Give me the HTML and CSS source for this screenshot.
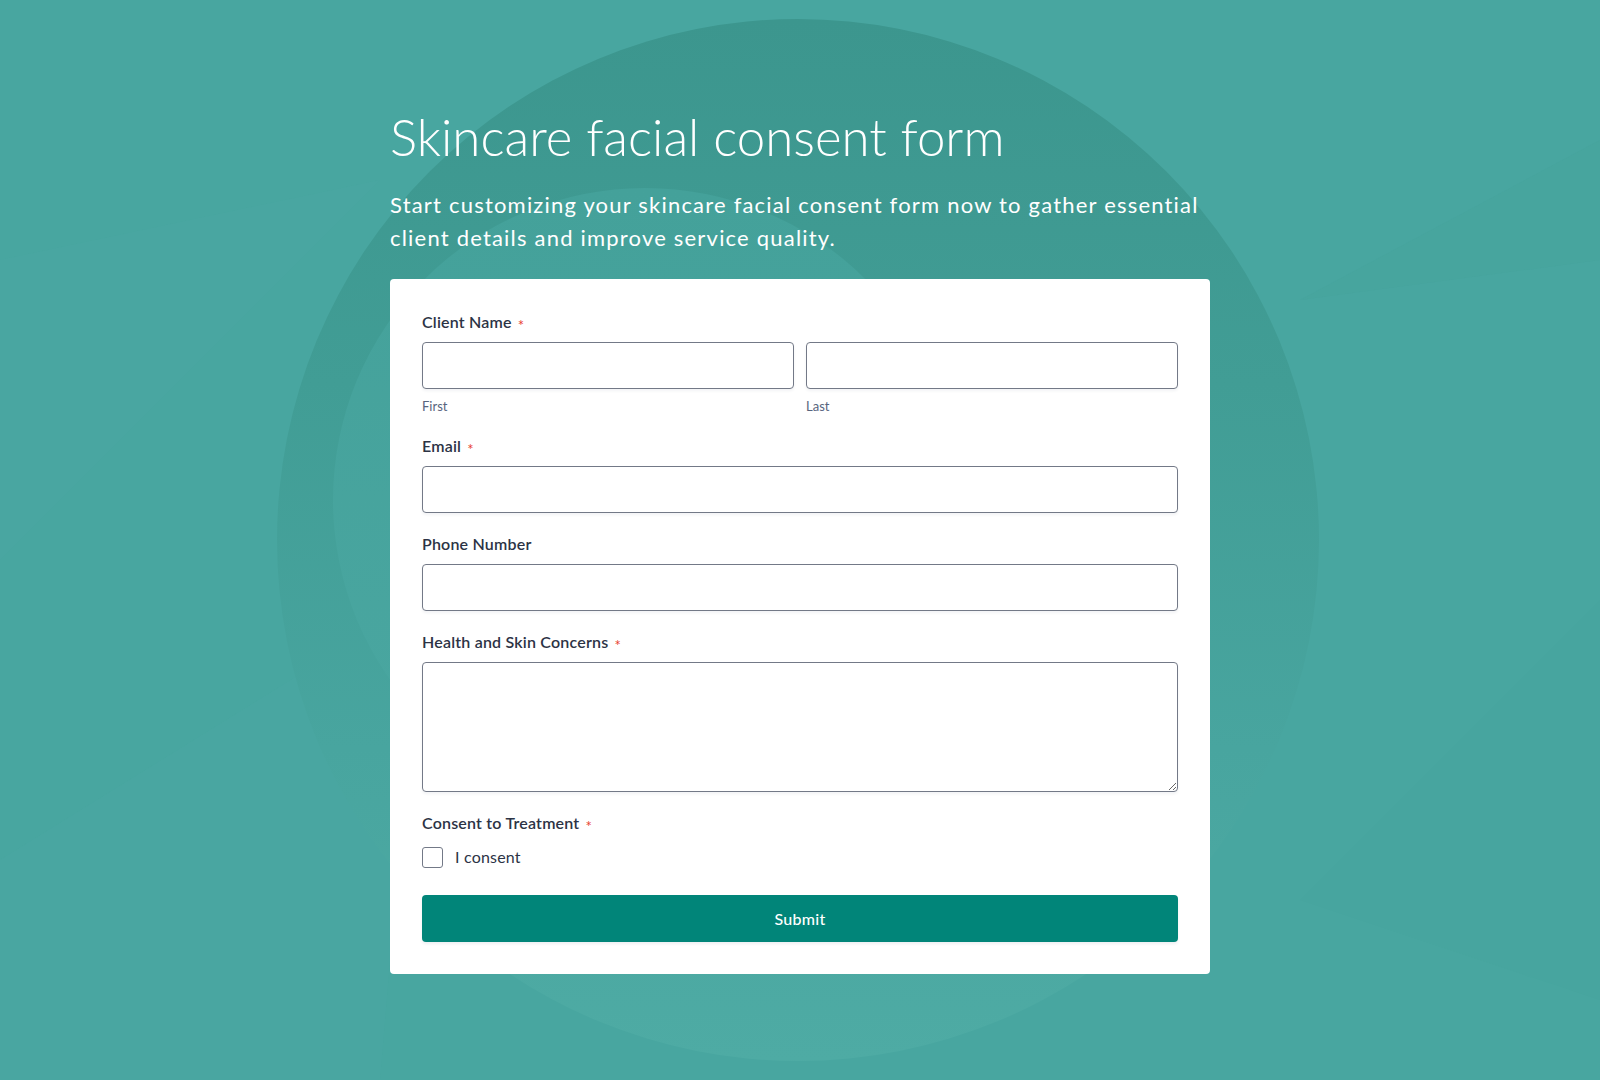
FILE: index.html
```html
<!DOCTYPE html>
<html lang="en">
<head>
<meta charset="utf-8">
<title>Skincare facial consent form</title>
<link rel="stylesheet" href="styles.css">
</head>
<body>
<div class="stage">
  <svg class="backdrop" viewBox="0 0 1600 1080" preserveAspectRatio="xMidYMid slice" aria-hidden="true">
    <defs>
      <linearGradient id="outer" x1="0" y1="0" x2="0" y2="1">
        <stop offset="0" stop-color="#3c968e"/>
        <stop offset="0.35" stop-color="#419d95"/>
        <stop offset="0.7" stop-color="#48a59f"/>
        <stop offset="1" stop-color="#4eaba4"/>
      </linearGradient>
      <linearGradient id="inner" x1="0" y1="0" x2="0" y2="1">
        <stop offset="0" stop-color="#44a19a"/>
        <stop offset="1" stop-color="#4aa7a1"/>
      </linearGradient>
    </defs>
    <rect width="1600" height="1080" fill="#48a6a0"/>
    <polygon points="1600,140 1300,300 1600,260" fill="#46a39c" opacity="0.5"/>
    <polygon points="0,260 380,180 0,560" fill="#4aa8a2" opacity="0.4"/>
    <polygon points="0,860 420,600 380,1080 0,1080" fill="#4aa8a2" opacity="0.4"/>
    <polygon points="1600,600 1300,900 1600,1000" fill="#46a49d" opacity="0.4"/>
    <circle cx="798" cy="540" r="521" fill="url(#outer)"/>
    <circle cx="645" cy="500" r="312" fill="url(#inner)"/>
  </svg>

  <main class="page">
    <header class="intro">
      <h1 class="title">Skincare facial consent form</h1>
      <p class="subtitle">Start customizing your skincare facial consent form now to gather essential client details and improve service quality.</p>
    </header>

    <form class="card">
      <div class="field">
        <div class="label">Client Name<span class="req">*</span></div>
        <div class="name-row">
          <div class="name-col">
            <input class="input" type="text" aria-label="First">
            <div class="sublabel">First</div>
          </div>
          <div class="name-col">
            <input class="input" type="text" aria-label="Last">
            <div class="sublabel">Last</div>
          </div>
        </div>
      </div>

      <div class="field">
        <div class="label">Email<span class="req">*</span></div>
        <input class="input" type="email" aria-label="Email">
      </div>

      <div class="field">
        <div class="label">Phone Number</div>
        <input class="input" type="tel" aria-label="Phone Number">
      </div>

      <div class="field">
        <div class="label">Health and Skin Concerns<span class="req">*</span></div>
        <textarea class="textarea" aria-label="Health and Skin Concerns"></textarea>
      </div>

      <div class="field">
        <div class="label">Consent to Treatment<span class="req">*</span></div>
        <label class="option">
          <input class="checkbox" type="checkbox">
          <span class="option-text">I consent</span>
        </label>
      </div>

      <div class="actions">
        <button class="submit" type="button">Submit</button>
      </div>
    </form>
  </main>
</div>
</body>
</html>
```

FILE: styles.css
```css
* {
  box-sizing: border-box;
}

html, body {
  margin: 0;
  padding: 0;
}

body {
  font-family: Lato, "Noto Sans", "Liberation Sans", sans-serif;
  color: #2c3345;
  background: #48a6a0;
}

.stage {
  display: grid;
  min-height: 100vh;
  overflow: hidden;
}

.backdrop {
  grid-area: 1 / 1;
  width: 100%;
  height: 100vh;
  display: block;
}

.page {
  grid-area: 1 / 1;
  width: 820px;
  margin: 0 auto;
  padding-top: 106px;
  padding-bottom: 40px;
  z-index: 1;
}

.intro {
  color: #ffffff;
  margin-bottom: 25px;
}

.title {
  margin: 0;
  font-size: 51px;
  font-weight: 300;
  line-height: 61px;
  letter-spacing: 0;
}

.subtitle {
  margin: 21px 0 0;
  font-size: 22px;
  font-weight: 400;
  line-height: 33px;
  letter-spacing: 1.2px;
}

.card {
  background: #ffffff;
  border-radius: 4px;
  padding: 31px 32px 32px;
  display: flex;
  flex-direction: column;
  gap: 19px;
}

.field {
  display: flex;
  flex-direction: column;
}

.label {
  font-size: 16px;
  font-weight: 600;
  line-height: 24px;
  height: 24px;
  letter-spacing: 0.2px;
  color: #2c3345;
  margin-bottom: 8px;
}

.req {
  color: #e8402f;
  font-size: 15px;
  font-weight: 400;
  line-height: 0;
  margin-left: 6px;
  vertical-align: -3px;
}

.name-row {
  display: flex;
  gap: 12px;
}

.name-col {
  flex: 1;
  display: flex;
  flex-direction: column;
}

.input,
.textarea {
  width: 100%;
  height: 47px;
  border: 1px solid #737987;
  border-radius: 4px;
  background: #ffffff;
  font-family: inherit;
  font-size: 16px;
  padding: 0 12px;
  box-shadow: 0 2px 3px rgba(42, 55, 89, 0.06);
  margin: 0;
}

.textarea {
  height: 130px;
  padding: 10px 12px;
  resize: vertical;
  display: block;
}

.sublabel {
  margin-top: 8px;
  font-size: 13px;
  line-height: 18px;
  color: #57647e;
}

.option {
  display: flex;
  align-items: center;
  gap: 12px;
  margin-top: 3px;
  height: 22px;
}

.checkbox {
  appearance: none;
  -webkit-appearance: none;
  width: 21px;
  height: 21px;
  margin: 0;
  border: 1px solid #737987;
  border-radius: 3px;
  background: #ffffff;
}

.option-text {
  font-size: 16px;
  line-height: 22px;
  letter-spacing: 0.2px;
  color: #2c3345;
}

.actions {
  padding-top: 8px;
}

.submit {
  width: 100%;
  height: 47px;
  border: none;
  border-radius: 4px;
  background: #018579;
  color: #ffffff;
  font-family: inherit;
  font-size: 16px;
  font-weight: 500;
  letter-spacing: 0.3px;
  box-shadow: 0 2px 3px rgba(42, 55, 89, 0.08);
  cursor: pointer;
}
```
